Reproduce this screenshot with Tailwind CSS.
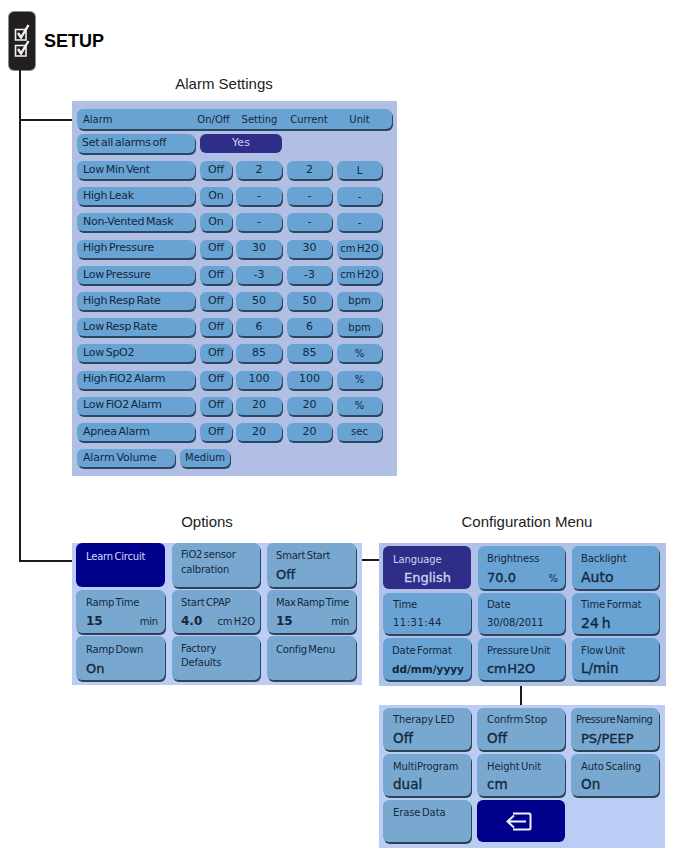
<!DOCTYPE html>
<html lang="en">
<head>
    <meta charset="UTF-8" />
    <title>Setup</title>
    <script src="https://cdn.jsdelivr.net/npm/@tailwindcss/browser@4"></script>
</head>
<body class="bg-white">
<div class="relative w-[678px] h-[863px] overflow-hidden bg-white text-[#14283c] font-['DejaVu_Sans',sans-serif] [word-spacing:-1.5px]">

    <!-- connector lines -->
    <div class="absolute left-[19px] top-[70px] w-[2px] h-[492px] bg-[#1a1a1a]"></div>
    <div class="absolute left-[20px] top-[119px] w-[52px] h-[2px] bg-[#1a1a1a]"></div>
    <div class="absolute left-[20px] top-[560px] w-[52px] h-[2px] bg-[#1a1a1a]"></div>
    <div class="absolute left-[362px] top-[559px] w-[17px] h-[2px] bg-[#1a1a1a]"></div>
    <div class="absolute left-[520px] top-[686px] w-[2px] h-[19px] bg-[#1a1a1a]"></div>

    <header class="flex items-center pl-[9px] pt-[12px]">
        <div class="flex h-[58px] w-[26px] items-center justify-center rounded-[5px] bg-[#231f20] ring-1 ring-[#8a8a8a]">
            <svg width="18" height="34" viewBox="0 0 18 34" fill="none">
                <path d="M2.5 5.5h10.5v10.5H2.5zM2.5 21.5h10.5v10.5H2.5z" stroke="#f2f2f2" stroke-width="1.6"/>
                <path d="M5 9l3 4.5L15.5 1M5 25l3 4.5L15.5 17" stroke="#f2f2f2" stroke-width="2.4"/>
            </svg>
        </div>
        <h1 class="ml-[9px] font-['Liberation_Sans',sans-serif] text-[18px] font-bold leading-none text-black [word-spacing:0]">SETUP</h1>
    </header>

    <h2 class="ml-[72px] mt-[5px] w-[304px] text-center font-['Liberation_Sans',sans-serif] text-[15px] leading-[17px] text-[#222] [word-spacing:0]">Alarm Settings</h2>

    <section id="alarm-panel" class="ml-[72px] mt-[9px] flex h-[375px] w-[325px] flex-col bg-[#b0bfe3] pl-[5px] pt-[8px] text-[10px]">
        <div class="mb-[5px] flex h-[20px] w-[315px] items-center rounded-[6px] bg-[#68a3d3] pl-[6px] shadow-[1px_2px_0_#2b4660]">
            <span class="w-[107px]">Alarm</span>
            <span class="w-[47px] text-center">On/Off</span>
            <span class="w-[45px] text-center">Setting</span>
            <span class="w-[54px] text-center">Current</span>
            <span class="w-[47px] text-center">Unit</span>
        </div>
        <div class="mb-[8px] flex h-[19px] gap-[5px]">
            <div class="flex w-[118px] items-center whitespace-nowrap rounded-[6px] bg-[#68a3d3] pl-[5px] text-[11px] tracking-[-0.25px] shadow-[1px_2px_0_#2b4660]">Set all alarms off</div>
            <div class="flex w-[82px] items-center justify-center rounded-[6px] bg-[#2e2d88] text-[11px] text-[#c9d3ee]">Yes</div>
        </div>
        <div id="alarm-rows" class="flex flex-col gap-[8.2px]"></div>
        <div class="mt-[8px] flex h-[18px] gap-[5px]">
            <div class="flex w-[98px] items-center rounded-[6px] bg-[#68a3d3] pl-[6px] text-[11px] tracking-[-0.15px] shadow-[1px_2px_0_#2b4660]">Alarm Volume</div>
            <div class="flex w-[50px] items-center justify-center rounded-[6px] bg-[#68a3d3] text-[10px] shadow-[1px_2px_0_#2b4660]">Medium</div>
        </div>
    </section>

    <div class="ml-[72px] mt-[37px] flex items-start">
        <!-- options -->
        <div class="w-[290px]">
            <h2 class="h-[17px] mb-[13px] pr-[20px] text-center font-['Liberation_Sans',sans-serif] text-[15px] leading-[17px] text-[#222] [word-spacing:0]">Options</h2>
            <div class="grid h-[142px] grid-cols-[89px_88px_89px] grid-rows-[44px_43px_44px] gap-x-[7px] gap-y-[3px] bg-[#bccdf5] pl-[4px] text-[10px] tracking-[-0.2px]">
                <div class="rounded-[6px] bg-[#00008b] pl-[10px] pt-[6px] text-[#d5dcf5]">Learn Circuit</div>
                <div class="rounded-[6px] bg-[#78a8cf] pl-[9px] pt-[4px] leading-[15px] shadow-[1px_2px_0_#2d4252]">FiO2 sensor<br>calbration</div>
                <div class="rounded-[6px] bg-[#78a8cf] pl-[9px] pt-[6px] leading-[13px] shadow-[1px_2px_0_#2d4252]">Smart Start<div class="mt-[6px] text-[13px] tracking-normal [-webkit-text-stroke:0.35px]">Off</div></div>

                <div class="rounded-[6px] bg-[#78a8cf] pl-[10px] pt-[6px] leading-[13px] shadow-[1px_2px_0_#2d4252]">Ramp Time<div class="mt-[6px] flex items-baseline justify-between pr-[7px]"><span class="text-[12px] font-bold tracking-normal">15</span><span>min</span></div></div>
                <div class="rounded-[6px] bg-[#78a8cf] pl-[9px] pt-[6px] leading-[13px] shadow-[1px_2px_0_#2d4252]">Start CPAP<div class="mt-[6px] flex items-baseline justify-between pr-[5px]"><span class="text-[12px] font-bold tracking-normal">4.0</span><span>cm H2O</span></div></div>
                <div class="whitespace-nowrap rounded-[6px] bg-[#78a8cf] pl-[9px] pt-[6px] leading-[13px] tracking-[-0.35px] shadow-[1px_2px_0_#2d4252]">Max Ramp Time<div class="mt-[6px] flex items-baseline justify-between pr-[7px]"><span class="text-[12px] font-bold tracking-normal">15</span><span>min</span></div></div>

                <div class="rounded-[6px] bg-[#78a8cf] pl-[10px] pt-[7px] leading-[13px] shadow-[1px_2px_0_#2d4252]">Ramp Down<div class="mt-[6px] text-[13px] tracking-normal [-webkit-text-stroke:0.35px]">On</div></div>
                <div class="rounded-[6px] bg-[#78a8cf] pl-[9px] pt-[6px] leading-[14px] shadow-[1px_2px_0_#2d4252]">Factory<br>Defaults</div>
                <div class="rounded-[6px] bg-[#78a8cf] pl-[9px] pt-[7px] leading-[13px] shadow-[1px_2px_0_#2d4252]">Config Menu</div>
            </div>
        </div>

        <!-- configuration -->
        <div class="ml-[17px] w-[287px]">
            <h2 class="h-[17px] mb-[13px] pl-[9px] text-center font-['Liberation_Sans',sans-serif] text-[15px] leading-[17px] text-[#222] [word-spacing:0]">Configuration Menu</h2>
            <div class="grid h-[143px] grid-cols-[88px_87px_87px] grid-rows-[43px_41px_42px] gap-x-[7px] gap-y-[4px] bg-[#b0c2e8] pl-[4px] pt-[3px] text-[10px] tracking-[-0.1px]">
                <div class="rounded-[6px] bg-[#2e2d88] pl-[10px] pt-[7px] leading-[13px] text-[#c9d3ee]">Language<div class="mt-[5px] pl-[11px] text-[13px] tracking-normal [-webkit-text-stroke:0.35px]">English</div></div>
                <div class="rounded-[6px] bg-[#68a3d3] pl-[9px] pt-[6px] leading-[13px] shadow-[1px_2px_0_#2b4660]">Brightness<div class="mt-[6px] flex items-baseline justify-between pr-[7px]"><span class="text-[13px] tracking-normal [-webkit-text-stroke:0.35px]">70.0</span><span>%</span></div></div>
                <div class="rounded-[6px] bg-[#68a3d3] pl-[9px] pt-[6px] leading-[13px] shadow-[1px_2px_0_#2b4660]">Backlight<div class="mt-[6px] text-[14px] tracking-normal [-webkit-text-stroke:0.35px]">Auto</div></div>

                <div class="rounded-[6px] bg-[#68a3d3] pl-[10px] pt-[5px] leading-[13px] shadow-[1px_2px_0_#2b4660]">Time<div class="mt-[5px] tracking-[0.5px]">11:31:44</div></div>
                <div class="rounded-[6px] bg-[#68a3d3] pl-[9px] pt-[5px] leading-[13px] shadow-[1px_2px_0_#2b4660]">Date<div class="mt-[5px]">30/08/2011</div></div>
                <div class="rounded-[6px] bg-[#68a3d3] pl-[9px] pt-[5px] leading-[13px] shadow-[1px_2px_0_#2b4660]">Time Format<div class="mt-[6px] text-[14px] tracking-normal [-webkit-text-stroke:0.35px]">24 h</div></div>

                <div class="rounded-[6px] bg-[#68a3d3] pl-[9px] pt-[6px] leading-[13px] shadow-[1px_2px_0_#2b4660]">Date Format<div class="mt-[6px] text-[10.5px] font-bold tracking-normal">dd/mm/yyyy</div></div>
                <div class="rounded-[6px] bg-[#68a3d3] pl-[9px] pt-[6px] leading-[13px] shadow-[1px_2px_0_#2b4660]">Pressure Unit<div class="mt-[5px] text-[13px] tracking-[-0.2px] [-webkit-text-stroke:0.35px] [word-spacing:-3px]">cm H2O</div></div>
                <div class="rounded-[6px] bg-[#68a3d3] pl-[9px] pt-[6px] leading-[13px] shadow-[1px_2px_0_#2b4660]">Flow Unit<div class="mt-[5px] text-[13.5px] tracking-normal [-webkit-text-stroke:0.35px]">L/min</div></div>
            </div>

            <div class="mt-[19px] grid h-[143px] w-[286px] grid-cols-[88px_88px_88px] grid-rows-[42px_42px_42px] gap-x-[6px] gap-y-[4px] bg-[#bccdf5] pl-[4px] pt-[3px] text-[10px] tracking-[-0.1px]">
                <div class="rounded-[6px] bg-[#78a8cf] pl-[10px] pt-[5px] leading-[13px] shadow-[1px_2px_0_#2d4252]">Therapy LED<div class="mt-[6px] text-[13.5px] tracking-normal [-webkit-text-stroke:0.35px]">Off</div></div>
                <div class="rounded-[6px] bg-[#78a8cf] pl-[10px] pt-[5px] leading-[13px] shadow-[1px_2px_0_#2d4252]">Confrm Stop<div class="mt-[6px] text-[13.5px] tracking-normal [-webkit-text-stroke:0.35px]">Off</div></div>
                <div class="whitespace-nowrap rounded-[6px] bg-[#78a8cf] pl-[5px] pt-[5px] leading-[13px] tracking-[-0.45px] shadow-[1px_2px_0_#2d4252]">Pressure Naming<div class="mt-[6px] pl-[5px] text-[13px] tracking-normal [-webkit-text-stroke:0.35px]">PS/PEEP</div></div>

                <div class="rounded-[6px] bg-[#78a8cf] pl-[10px] pt-[6px] leading-[13px] shadow-[1px_2px_0_#2d4252]">MultiProgram<div class="mt-[5px] text-[13.5px] tracking-normal [-webkit-text-stroke:0.35px]">dual</div></div>
                <div class="rounded-[6px] bg-[#78a8cf] pl-[10px] pt-[6px] leading-[13px] shadow-[1px_2px_0_#2d4252]">Height Unit<div class="mt-[5px] text-[13.5px] tracking-normal [-webkit-text-stroke:0.35px]">cm</div></div>
                <div class="rounded-[6px] bg-[#78a8cf] pl-[10px] pt-[6px] leading-[13px] shadow-[1px_2px_0_#2d4252]">Auto Scaling<div class="mt-[5px] text-[13.5px] tracking-normal [-webkit-text-stroke:0.35px]">On</div></div>

                <div class="rounded-[6px] bg-[#78a8cf] pl-[10px] pt-[6px] leading-[13px] shadow-[1px_2px_0_#2d4252]">Erase Data</div>
                <div class="flex items-center justify-center rounded-[6px] bg-[#00008b] pr-[6px] pt-[1px]">
                    <svg width="27" height="19" viewBox="0 0 27 19" fill="none" stroke="#f0f3ff" stroke-width="2">
                        <path d="M8 1.5h16a1.5 1.5 0 0 1 1.5 1.5v13a1.5 1.5 0 0 1-1.5 1.5H8"/>
                        <path d="M21 9.5H2.5M9 3.5l-6.5 6 6.5 6"/>
                    </svg>
                </div>
            </div>
        </div>
    </div>
</div>

<script>
    const alarmRows = [
        ['Low Min Vent', 'Off', '2', '2', 'L'],
        ['High Leak', 'On', '-', '-', '-'],
        ['Non-Vented Mask', 'On', '-', '-', '-'],
        ['High Pressure', 'Off', '30', '30', 'cm H2O'],
        ['Low Pressure', 'Off', '-3', '-3', 'cm H2O'],
        ['High Resp Rate', 'Off', '50', '50', 'bpm'],
        ['Low Resp Rate', 'Off', '6', '6', 'bpm'],
        ['Low SpO2', 'Off', '85', '85', '%'],
        ['High FiO2 Alarm', 'Off', '100', '100', '%'],
        ['Low FiO2 Alarm', 'Off', '20', '20', '%'],
        ['Apnea Alarm', 'Off', '20', '20', 'sec']
    ];

    const btn = 'flex items-center justify-center rounded-[6px] bg-[#68a3d3] shadow-[1px_2px_0_#2b4660]';

    document.getElementById('alarm-rows').innerHTML = alarmRows.map(r => `
        <div class="flex h-[18px] gap-[5px]">
            <div class="flex w-[118px] items-center whitespace-nowrap rounded-[6px] bg-[#68a3d3] pl-[6px] text-[11px] tracking-[-0.25px] shadow-[1px_2px_0_#2b4660]">${r[0]}</div>
            <div class="${btn} w-[32px] text-[11px]">${r[1]}</div>
            <div class="${btn} ml-[-1px] w-[46px] text-[11px]">${r[2]}</div>
            <div class="${btn} w-[45px] text-[11px]">${r[3]}</div>
            <div class="${btn} w-[45px] text-[10px]">${r[4]}</div>
        </div>`).join('');
</script>
</body>
</html>
